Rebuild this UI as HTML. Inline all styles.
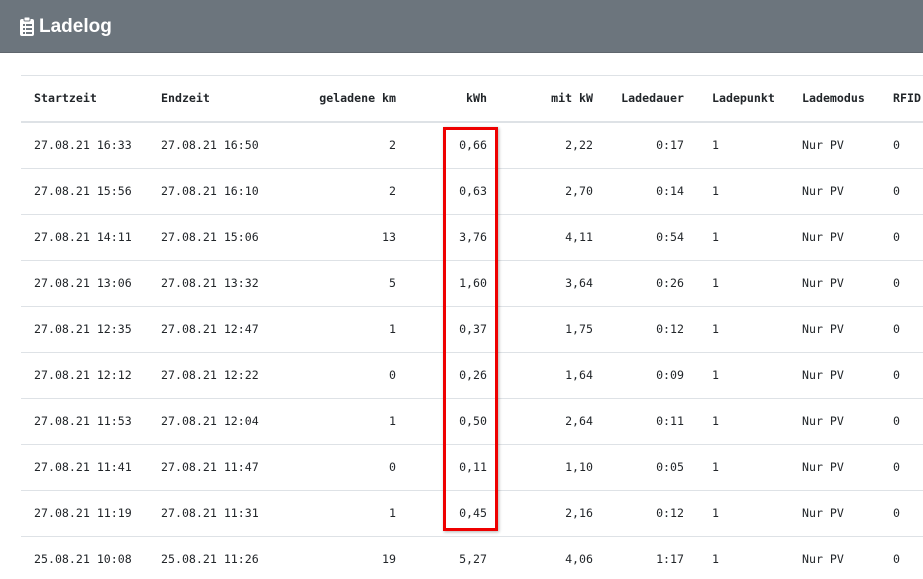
<!DOCTYPE html><html><head><style>
body{margin:0;width:923px;height:579px;overflow:hidden;background:#fff;position:relative;font-family:"DejaVu Sans Mono","Liberation Mono",monospace;font-size:11.6px;color:#212529}
.hdr{position:absolute;left:0;top:0;width:923px;height:52px;background:#6c757d;border-bottom:1px solid #5f666d}
.hdr span{position:absolute;left:39px;top:16px;font:bold 19px "Liberation Sans",sans-serif;color:#fff}
.line{position:absolute;left:21px;width:902px;background:#dee2e6}
.c{position:absolute;white-space:pre}
.b{font-weight:bold}
.box{position:absolute;left:443px;top:127px;width:49px;height:398px;border:3px solid #e00;box-shadow:1px 1px 3px rgba(0,0,0,.3)}
</style></head><body>
<div class="hdr"><svg style="position:absolute;left:20px;top:17px" width="14" height="19" viewBox="0 0 14 19"><rect x="0" y="2" width="14" height="17" rx="2" fill="#fff"/><rect x="4" y="0" width="6" height="4" rx="1" fill="#fff" stroke="#6c757d" stroke-width="1"/><g fill="#6c757d"><rect x="3" y="7" width="2" height="2"/><rect x="6" y="7" width="6" height="2"/><rect x="3" y="11" width="2" height="2"/><rect x="6" y="11" width="6" height="2"/><rect x="3" y="15" width="2" height="2"/><rect x="6" y="15" width="6" height="2"/></g></svg><span>Ladelog</span></div>
<div class="line" style="top:75px;height:1px"></div>
<div class="line" style="top:121px;height:2px"></div>
<div id="t"></div>
<div class="box"></div>
<script>
var rows=[["27.08.21 16:33","27.08.21 16:50","2","0,66","2,22","0:17"],["27.08.21 15:56","27.08.21 16:10","2","0,63","2,70","0:14"],["27.08.21 14:11","27.08.21 15:06","13","3,76","4,11","0:54"],["27.08.21 13:06","27.08.21 13:32","5","1,60","3,64","0:26"],["27.08.21 12:35","27.08.21 12:47","1","0,37","1,75","0:12"],["27.08.21 12:12","27.08.21 12:22","0","0,26","1,64","0:09"],["27.08.21 11:53","27.08.21 12:04","1","0,50","2,64","0:11"],["27.08.21 11:41","27.08.21 11:47","0","0,11","1,10","0:05"],["27.08.21 11:19","27.08.21 11:31","1","0,45","2,16","0:12"],["25.08.21 10:08","25.08.21 11:26","19","5,27","4,06","1:17"]];
var h="";
function cell(t,y,x,right,cls){h+='<div class="c '+(cls||'')+'" style="top:'+y+'px;'+(right?'right:'+(923-x)+'px;text-align:right':'left:'+x+'px')+'">'+t+'</div>';}
var hy=91;
cell("Startzeit",hy,34,0,"b");cell("Endzeit",hy,161,0,"b");cell("geladene km",hy,396,1,"b");cell("kWh",hy,487,1,"b");cell("mit kW",hy,593,1,"b");cell("Ladedauer",hy,684,1,"b");cell("Ladepunkt",hy,712,0,"b");cell("Lademodus",hy,802,0,"b");cell("RFID",hy,893,0,"b");
rows.forEach(function(r,i){var y=138+i*46;cell(r[0],y,34);cell(r[1],y,161);cell(r[2],y,396,1);cell(r[3],y,487,1);cell(r[4],y,593,1);cell(r[5],y,684,1);cell("1",y,712);cell("Nur PV",y,802);cell("0",y,893);
if(i<9)h+='<div class="line" style="top:'+(168+i*46)+'px;height:1px"></div>';});
document.getElementById("t").innerHTML=h;
</script>
</body></html>
